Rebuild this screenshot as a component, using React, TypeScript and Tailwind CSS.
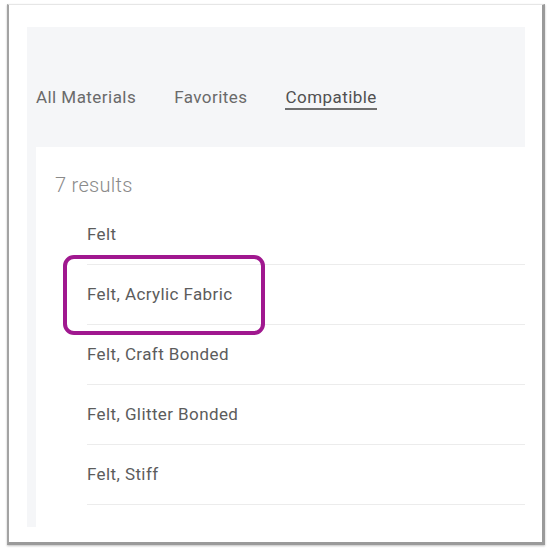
const tabs = [
  { label: "All Materials", active: false },
  { label: "Favorites", active: false },
  { label: "Compatible", active: true },
];

const results = ["Felt", "Felt, Acrylic Fabric", "Felt, Craft Bonded", "Felt, Glitter Bonded", "Felt, Stiff"];

export default function App() {
  return (
    <div className="relative h-[554px] w-[554px] overflow-hidden bg-white pl-[7px] pt-[4px] font-['Roboto',sans-serif]">
      <div className="h-[541px] w-[538px] border-b-[3px] border-l-[2px] border-r-[3px] border-t border-b-[#9a9a9a] border-l-[#a3a3a3] border-r-[#9a9a9a] border-t-[#e6e6e6] bg-white shadow-[0_1px_2px_rgba(0,0,0,0.25)]">
        <div className="ml-[18px] mt-[22px] flex h-[120px] w-[498px] items-start gap-[38px] bg-[#f5f6f8] pl-[9px] pt-[58px]">
          {tabs.map((t) => (
            <div key={t.label} className="flex flex-col">
              <span className={`text-[17px] leading-[24px] tracking-[0.45px] ${t.active ? "text-[#505050]" : "text-[#6a6a6a]"}`}>{t.label}</span>
              {t.active && <span className="mt-[-1px] h-[2px] w-full bg-[#6f6f6f]" />}
            </div>
          ))}
        </div>
        <div className="flex">
          <div className="ml-[18px] h-[380px] w-[9px] bg-[#f5f6f8]" />
          <div className="flex-1">
            <div className="pl-[19px] pt-[26px] text-[20px] font-light leading-[24px] tracking-[0.3px] text-[#8a8a8a]">7 results</div>
            <div className="mt-[8px]">
              {results.map((r) => (
                <div key={r} className="ml-[51px] mr-[17px] flex h-[60px] items-center border-b border-[#ececec] text-[17px] tracking-[0.4px] text-[#5c5c5c]">
                  {r}
                </div>
              ))}
            </div>
          </div>
        </div>
      </div>
      <div className="absolute left-[63px] top-[255px] h-[80px] w-[202px] rounded-[11px] border-[4px] border-[#a0188f]" />
    </div>
  );
}
